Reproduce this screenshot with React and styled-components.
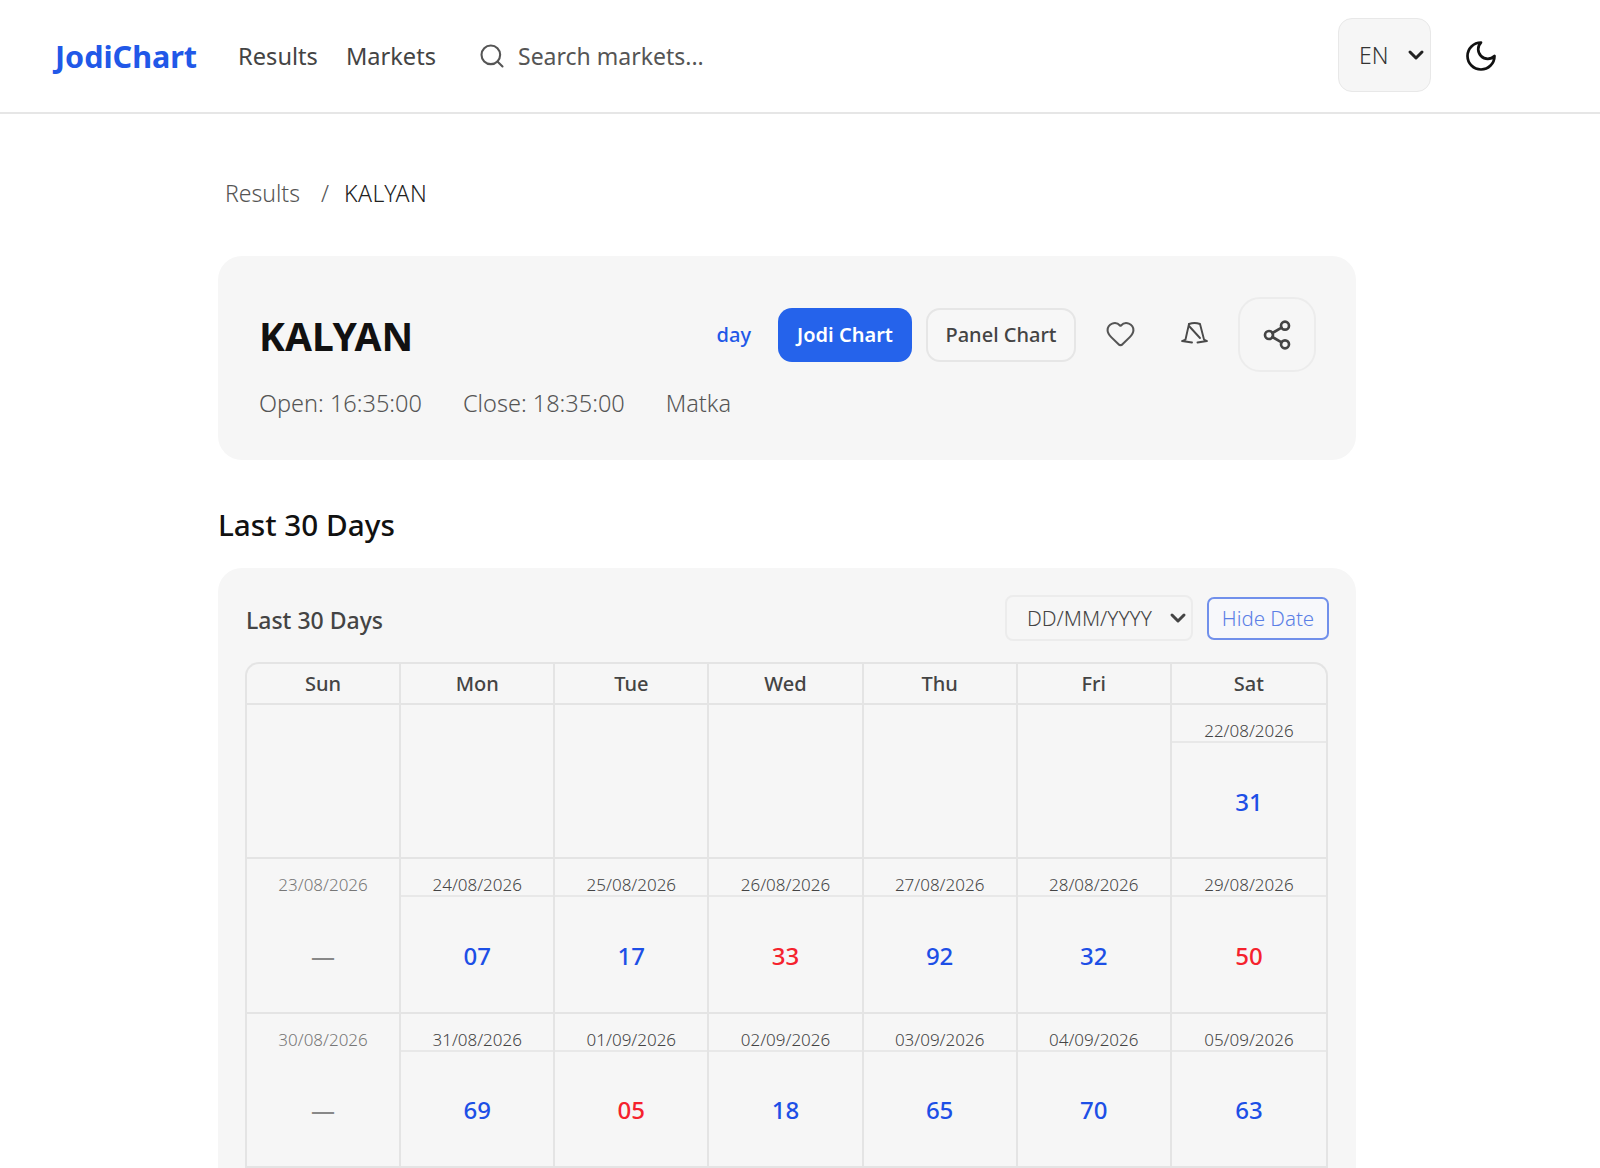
import React from "react";
import styled, { createGlobalStyle } from "styled-components";
import { Search, Heart, Share2 } from "lucide-react";

const Global = createGlobalStyle`
  html, body { margin: 0; padding: 0; height: 1168px; overflow: hidden; background: #fff; }
  body { font-family: "Noto Sans", "Open Sans", sans-serif; color: #1a1a1a; }
  * { box-sizing: border-box; }
`;

const Page = styled.div`
  height: 1168px;
  display: flex;
  flex-direction: column;
  overflow: hidden;
`;
const Header = styled.header`
  flex: none;
  height: 114px;
  border-bottom: 2px solid #e6e6e6;
  display: flex;
  align-items: center;
  padding: 0 101px 0 55px;
`;
const Logo = styled.a`
  font-size: 30.5px;
  font-weight: 700;
  color: #2158e8;
  margin-right: 41px;
`;
const NavLink = styled.a`
  font-size: 23.6px;
  color: #444;
  margin-right: 28px;
`;
const SearchBox = styled.div`
  display: flex;
  align-items: center;
  gap: 12px;
  margin-left: 14px;
  font-size: 23px;
  color: #555;
  flex: 1;
`;
const LangSelect = styled.div`
  width: 93px;
  height: 74px;
  border: 1px solid #e8e8e8;
  border-radius: 14px;
  background: #f6f6f6;
  display: flex;
  align-items: center;
  justify-content: space-between;
  padding: 0 4px 0 20px;
  font-size: 23px;
  font-weight: 300;
  color: #333;
  margin: 0 32px 2px 0;
`;
const Chevron = styled.svg`
  width: 20px;
  height: 20px;
  fill: none;
  stroke: ${(p) => p.$color || "#222"};
  stroke-width: 3;
  stroke-linecap: round;
  stroke-linejoin: round;
`;
const DrawnIcon = styled.svg`
  fill: none;
  stroke: currentColor;
  stroke-linecap: round;
  stroke-linejoin: round;
`;
const Main = styled.main`
  flex: 1;
  width: 1138px;
  margin-left: 218px;
  display: flex;
  flex-direction: column;
  min-height: 0;
`;
const Crumbs = styled.nav`
  flex: none;
  height: 142px;
  padding: 62px 0 0 7px;
  display: flex;
  gap: 20px;
  font-size: 23px;
  font-weight: 300;
  line-height: 34px;
  color: #555;
`;
const CrumbSeparator = styled.span`
  margin: 0 -5px 0 1px;
`;
const CrumbCurrent = styled.span`
  color: #222;
  letter-spacing: 0.5px;
`;
const Card = styled.section`
  background: #f6f6f6;
  border-radius: 24px;
`;
const HeroCard = styled(Card)`
  flex: none;
  height: 204px;
  padding: 41px 40px 0 41px;
`;
const HeroTop = styled.div`
  display: flex;
  align-items: center;
  height: 75px;
`;
const Title = styled.h1`
  margin: 0;
  flex: 1;
  font-size: 39px;
  line-height: 54px;
  padding-top: 2px;
  font-weight: 700;
  color: #111;
`;
const DayLink = styled.a`
  font-size: 20px;
  font-weight: 500;
  color: #2158e8;
  margin-right: 27px;
`;
const ChartButton = styled.button`
  font-family: inherit;
  height: 54px;
  width: ${(p) => p.$width}px;
  border-radius: 14px;
  font-size: 20px;
  font-weight: ${(p) => (p.$primary ? 600 : 500)};
  color: ${(p) => (p.$primary ? "#fff" : "#444")};
  background: ${(p) => (p.$primary ? "#2563eb" : "#f7f7f7")};
  border: ${(p) => (p.$primary ? "none" : "2px solid #e6e6e6")};
  margin-right: ${(p) => p.$gap}px;
  padding: 0;
`;
const IconSlot = styled.span`
  width: ${(p) => p.$width}px;
  display: flex;
  justify-content: center;
  color: #555;
  margin-bottom: 3px;
`;
const ShareButton = styled.button`
  width: 78px;
  height: 75px;
  border: 2px solid #ececec;
  border-radius: 22px;
  background: #f6f6f6;
  color: #444;
  display: flex;
  align-items: center;
  justify-content: center;
  padding: 0;
`;
const Meta = styled.div`
  display: flex;
  gap: 41px;
  margin-top: 13px;
  font-size: 23.5px;
  font-weight: 300;
  line-height: 36px;
  color: #555;
`;
const SectionHeading = styled.h2`
  flex: none;
  margin: 0;
  height: 108px;
  padding-top: 44px;
  font-size: 29.7px;
  line-height: 42px;
  font-weight: 500;
  color: #111;
`;
const ChartCard = styled(Card)`
  flex: 1;
  min-height: 0;
  border-radius: 24px 24px 0 0;
  padding: 27px 27px 0;
`;
const ChartTop = styled.div`
  display: flex;
  align-items: center;
  height: 46px;
  margin-bottom: 21px;
`;
const ChartTitle = styled.h3`
  margin: 0;
  flex: 1;
  padding: 3px 0 0 1px;
  font-size: 23px;
  font-weight: 500;
  color: #444;
`;
const DateSelect = styled.div`
  width: 188px;
  height: 46px;
  border: 2px solid #ececec;
  border-radius: 8px;
  display: flex;
  align-items: center;
  justify-content: space-between;
  padding: 0 3px 0 20px;
  font-size: 20.8px;
  font-weight: 300;
  color: #444;
  margin-right: 14px;
`;
const HideButton = styled.button`
  font-family: inherit;
  width: 122px;
  height: 43px;
  border: 2px solid #7190eb;
  border-radius: 7px;
  background: #f7f8fb;
  color: #5b7fe6;
  font-size: 20.5px;
  font-weight: 300;
  padding: 0;
`;
const Grid = styled.div`
  display: grid;
  grid-template-columns: repeat(7, 1fr);
  width: 1083px;
  border: 2px solid #e4e4e4;
  border-bottom: none;
  border-radius: 14px 14px 0 0;
`;
const DayHead = styled.div`
  height: 41px;
  display: flex;
  align-items: center;
  justify-content: center;
  font-size: 20px;
  font-weight: 500;
  color: #444;
  border-bottom: 2px solid #e4e4e4;
  border-right: ${(p) => (p.$last ? "none" : "2px solid #e4e4e4")};
`;
const Cell = styled.div`
  height: 154.3px;
  display: flex;
  flex-direction: column;
  border-bottom: 2px solid #e4e4e4;
  border-right: ${(p) => (p.$last ? "none" : "2px solid #e4e4e4")};
`;
const StubCell = styled(Cell)`
  height: 4px;
  border-bottom: none;
`;
const CellDate = styled.div`
  height: 38px;
  flex: none;
  padding-top: 14px;
  line-height: 24px;
  text-align: center;
  font-size: 17px;
  font-weight: 300;
  color: ${(p) => (p.$plain ? "#777" : "#444")};
  border-bottom: ${(p) => (p.$plain ? "none" : "2px solid #e8e8e8")};
`;
const CellValue = styled.div`
  flex: 1;
  display: flex;
  align-items: center;
  justify-content: center;
  font-size: 24px;
  font-weight: 500;
  padding-top: 2px;
  color: ${(p) => (p.$red ? "#f5222d" : p.$empty ? "#888" : "#1d4fe6")};
`;

const days = ["Sun", "Mon", "Tue", "Wed", "Thu", "Fri", "Sat"];
const cells = [
  null, null, null, null, null, null,
  { d: "22/08/2026", v: "31" },
  { d: "23/08/2026", plain: true, v: "—" },
  { d: "24/08/2026", v: "07" },
  { d: "25/08/2026", v: "17" },
  { d: "26/08/2026", v: "33", red: true },
  { d: "27/08/2026", v: "92" },
  { d: "28/08/2026", v: "32" },
  { d: "29/08/2026", v: "50", red: true },
  { d: "30/08/2026", plain: true, v: "—" },
  { d: "31/08/2026", v: "69" },
  { d: "01/09/2026", v: "05", red: true },
  { d: "02/09/2026", v: "18" },
  { d: "03/09/2026", v: "65" },
  { d: "04/09/2026", v: "70" },
  { d: "05/09/2026", v: "63" },
];

const Caret = ({ color }) => (
  <Chevron viewBox="0 0 20 20" $color={color}>
    <path d="M4 7l6 6 6-6" />
  </Chevron>
);

const CrescentMoon = () => (
  <DrawnIcon width="36" height="36" viewBox="0 0 24 24" strokeWidth="1.8" color="#111">
    <path d="M12 3a6 6 0 0 0 9 9 9 9 0 1 1-9-9Z" />
  </DrawnIcon>
);

const SlashedBell = () => (
  <DrawnIcon width="30" height="26" viewBox="0 0 30 24" strokeWidth="1.9" color="#4a4a4a">
    <path d="M9 3Q14.5 1 20 3L24 18.5L27 20L17.5 21.5" />
    <path d="M9 3L5.5 18.5L2 20L12 21.5" />
    <path d="M9 5L20 17" />
  </DrawnIcon>
);

export default function App() {
  return (
    <Page>
      <Global />
      <Header>
        <Logo>JodiChart</Logo>
        <NavLink>Results</NavLink>
        <NavLink>Markets</NavLink>
        <SearchBox>
          <Search size={28} color="#555" strokeWidth={1.8} />
          Search markets...
        </SearchBox>
        <LangSelect>
          EN
          <Caret />
        </LangSelect>
        <CrescentMoon />
      </Header>
      <Main>
        <Crumbs>
          <span>Results</span>
          <CrumbSeparator>/</CrumbSeparator>
          <CrumbCurrent>KALYAN</CrumbCurrent>
        </Crumbs>
        <HeroCard>
          <HeroTop>
            <Title>KALYAN</Title>
            <DayLink>day</DayLink>
            <ChartButton $primary $width={134} $gap={14}>Jodi Chart</ChartButton>
            <ChartButton $width={150} $gap={13}>Panel Chart</ChartButton>
            <IconSlot $width={62}><Heart size={31} strokeWidth={1.6} /></IconSlot>
            <IconSlot $width={87}><SlashedBell /></IconSlot>
            <ShareButton><Share2 size={32} strokeWidth={2} /></ShareButton>
          </HeroTop>
          <Meta>
            <span>Open: 16:35:00</span>
            <span>Close: 18:35:00</span>
            <span>Matka</span>
          </Meta>
        </HeroCard>
        <SectionHeading>Last 30 Days</SectionHeading>
        <ChartCard>
          <ChartTop>
            <ChartTitle>Last 30 Days</ChartTitle>
            <DateSelect>
              DD/MM/YYYY
              <Caret color="#444" />
            </DateSelect>
            <HideButton>Hide Date</HideButton>
          </ChartTop>
          <Grid>
            {days.map((d, i) => (
              <DayHead key={d} $last={i === 6}>{d}</DayHead>
            ))}
            {cells.map((c, i) => (
              <Cell key={i} $last={i % 7 === 6}>
                {c && (
                  <>
                    <CellDate $plain={c.plain}>{c.d}</CellDate>
                    <CellValue $red={c.red} $empty={c.plain}>{c.v}</CellValue>
                  </>
                )}
              </Cell>
            ))}
            {days.map((d, i) => (
              <StubCell key={d} $last={i === 6} />
            ))}
          </Grid>
        </ChartCard>
      </Main>
    </Page>
  );
}
